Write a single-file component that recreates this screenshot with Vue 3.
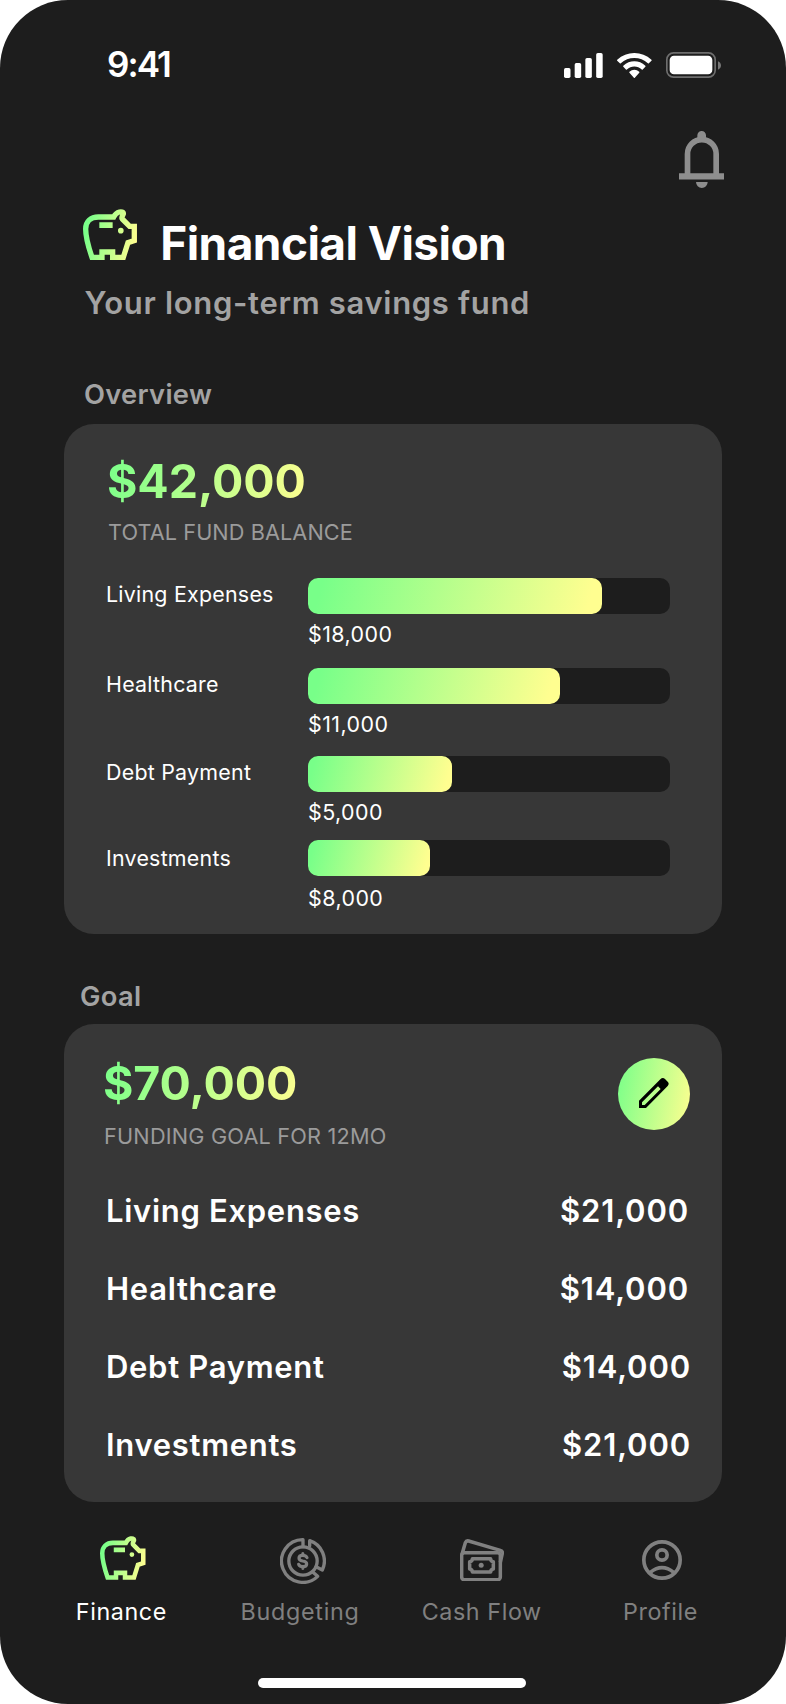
<script setup>
const overview = [
  { name: 'Living Expenses', amount: '$18,000', fill: 294 },
  { name: 'Healthcare', amount: '$11,000', fill: 252 },
  { name: 'Debt Payment', amount: '$5,000', fill: 144 },
  { name: 'Investments', amount: '$8,000', fill: 122 },
]
const goals = [
  { name: 'Living Expenses', amount: '$21,000' },
  { name: 'Healthcare', amount: '$14,000' },
  { name: 'Debt Payment', amount: '$14,000' },
  { name: 'Investments', amount: '$21,000' },
]
</script>

<template>
  <main class="screen">
    <header class="status">
      <span class="time">9:41</span>
      <div class="indicators">
        <svg class="signal" viewBox="0 0 116 75">
          <rect x="0" y="45" width="19.5" height="30" rx="5" />
          <rect x="32" y="30" width="19.5" height="45" rx="5" />
          <rect x="64" y="15" width="19.5" height="60" rx="5" />
          <rect x="96.5" y="0" width="19.5" height="75" rx="5" />
        </svg>
        <svg class="wifi" viewBox="0 0 17.142 12.328" preserveAspectRatio="none">
          <path d="M8.571 2.466C11.058 2.466 13.45 3.388 15.253 5.042C15.389 5.17 15.606 5.168 15.739 5.038L17.037 3.775C17.105 3.709 17.142 3.62 17.142 3.527C17.141 3.435 17.102 3.346 17.034 3.281C12.303 -1.094 4.839 -1.094 .108 3.281C.04 3.346 .001 3.435 0 3.527C0 3.62 .037 3.709 .105 3.775L1.403 5.038C1.536 5.168 1.753 5.17 1.889 5.042C3.692 3.388 6.084 2.466 8.571 2.466ZM8.568 6.687C9.925 6.686 11.234 7.198 12.24 8.122C12.376 8.253 12.591 8.251 12.723 8.116L14.011 6.797C14.078 6.727 14.116 6.634 14.115 6.537C14.114 6.439 14.075 6.347 14.005 6.279C10.942 3.355 6.197 3.355 3.133 6.279C3.064 6.347 3.024 6.439 3.023 6.537C3.023 6.634 3.06 6.728 3.128 6.797L4.415 8.116C4.548 8.251 4.762 8.253 4.898 8.122C5.904 7.199 7.212 6.687 8.568 6.687ZM11.092 9.48C11.094 9.585 11.057 9.687 10.99 9.761L8.813 12.216C8.749 12.288 8.662 12.328 8.572 12.328C8.481 12.328 8.394 12.288 8.33 12.216L6.153 9.761C6.086 9.687 6.049 9.585 6.051 9.48C6.053 9.375 6.094 9.275 6.164 9.204C7.554 7.888 9.59 7.888 10.98 9.204C11.05 9.275 11.09 9.375 11.092 9.48Z" />
        </svg>
        <svg class="battery" viewBox="0 0 165 78">
          <rect x="2.5" y="2.5" width="145" height="73" rx="20" class="shell" />
          <rect x="11" y="11" width="128" height="56" rx="13" />
          <path d="M156 28C162 31 165 35 165 40.500C165 46 162 50 156 53Z" class="nub" />
        </svg>
      </div>
    </header>

    <div class="alerts">
      <svg class="bell" viewBox="857 393 137 171">
        <path d="M882.500 522V462A43 43 0 0 1 968.500 462V522" fill="none" stroke="currentColor" stroke-width="17" />
        <path d="M912 418V406A13 13 0 0 1 938 406V418ZM857 520H994V538.500H857ZM908 546H943A17.500 18 0 0 1 908 546Z" fill="currentColor" />
      </svg>
    </div>

    <section class="heading">
      <svg class="pig" viewBox="69 57 163 154" preserveAspectRatio="none">
        <defs>
          <linearGradient id="pigFill" gradientUnits="userSpaceOnUse" x1="75" y1="120" x2="230" y2="150">
            <stop offset="0" stop-color="#78ff89" />
            <stop offset="1" stop-color="#fffe90" />
          </linearGradient>
        </defs>
        <path d="M161 81H115C92 81 77 95 77 117C77 141 87 176 96 202H126V186H158V202H190L204 158L223 152V109H209L187 87C183 83 188 77 190 72C191 65 183 65 178 66C169 68 165 73 161 81Z" fill="none" stroke="url(#pigFill)" stroke-width="16" />
        <path d="M118 97H158V114H118ZM174 122a8.500 8.500 0 1 0 17 0a8.500 8.500 0 1 0 -17 0Z" fill="url(#pigFill)" />
      </svg>
      <h1>Financial Vision</h1>
    </section>
    <p class="subtitle">Your long-term savings fund</p>

    <h2 class="label-overview">Overview</h2>
    <section class="card overview">
      <div class="total">$42,000</div>
      <div class="caption">TOTAL FUND BALANCE</div>
      <ul class="bars">
        <li v-for="row in overview" :key="row.name">
          <span class="bar-name">{{ row.name }}</span>
          <div class="bar-side">
            <div class="track"><div class="fill" :style="{ width: row.fill + 'px' }"></div></div>
            <span class="bar-amount">{{ row.amount }}</span>
          </div>
        </li>
      </ul>
    </section>

    <h2 class="label-goal">Goal</h2>
    <section class="card goal">
      <div class="goal-head">
        <div>
          <div class="total">$70,000</div>
          <div class="caption">FUNDING GOAL FOR 12MO</div>
        </div>
        <button class="edit" aria-label="Edit goal">
          <svg viewBox="297 204 90 90">
            <path fill-rule="evenodd" d="M297 294V272L361 208Q368 201 375 207L383 215Q389 221 383 228L318 294ZM306 285H314L362 237L354 229L306 277Z" />
          </svg>
        </button>
      </div>
      <ul class="goals">
        <li v-for="row in goals" :key="row.name">
          <span>{{ row.name }}</span>
          <span class="goal-amount">{{ row.amount }}</span>
        </li>
      </ul>
    </section>

    <nav class="tabs">
      <a class="tab active">
        <span class="tab-icon">
          <svg class="pig-small" viewBox="69 57 163 154" preserveAspectRatio="none">
            <path d="M161 81H115C92 81 77 95 77 117C77 141 87 176 96 202H126V186H158V202H190L204 158L223 152V109H209L187 87C183 83 188 77 190 72C191 65 183 65 178 66C169 68 165 73 161 81Z" fill="none" stroke="url(#pigFill)" stroke-width="16" />
            <path d="M118 97H158V114H118ZM174 122a8.500 8.500 0 1 0 17 0a8.500 8.500 0 1 0 -17 0Z" fill="url(#pigFill)" />
          </svg>
        </span>
        <span class="tab-name">Finance</span>
      </a>
      <a class="tab">
        <span class="tab-icon">
          <svg class="budget" viewBox="660 84 138 138" fill="none" stroke="currentColor" stroke-width="10" stroke-linejoin="round" stroke-linecap="round">
            <circle cx="729" cy="153" r="42.500" />
            <path d="M729 110V89A64 64 0 1 0 773 199L759 187" />
            <path d="M749 108V92A64 64 0 0 1 787 180L768 170" />
            <path stroke-width="9.500" d="M741 143C738 137 733 136 728 136C721 136 717 139 717 144C717 150 722 152 728 153C736 154 740 156 740 162C740 167 735 170 729 170C722 170 718 168 716 163M728.500 131V136M728.500 170V175" />
          </svg>
        </span>
        <span class="tab-name budgeting">Budgeting</span>
      </a>
      <a class="tab">
        <span class="tab-icon">
          <svg class="cash" viewBox="210 86 132 128" fill="none" stroke="currentColor" stroke-width="10.500" stroke-linejoin="round">
            <rect x="215" y="127" width="116" height="81" rx="8" />
            <path d="M216 132L226 97Q229 90 236 92L331 120Q338 122 337 129L331 156" />
            <path d="M247 145H302Q302 153 310 154V176Q302 177 302 185H247Q247 177 239 176V154Q247 153 247 145Z" />
            <circle cx="273.500" cy="165" r="7.500" fill="currentColor" stroke="none" />
          </svg>
        </span>
        <span class="tab-name cash-flow">Cash Flow</span>
      </a>
      <a class="tab">
        <span class="tab-icon">
          <svg class="profile" viewBox="756 90 120 120" fill="none" stroke="currentColor" stroke-width="11">
            <circle cx="816" cy="150" r="54.500" />
            <circle cx="816" cy="135" r="15.500" />
            <path d="M781 187Q816 159 851 187" />
          </svg>
        </span>
        <span class="tab-name">Profile</span>
      </a>
    </nav>
    <div class="home"></div>
  </main>
</template>

<style>
body {
  margin: 0;
  background: #fff;
}
</style>

<style scoped>
* {
  box-sizing: border-box;
}
.screen {
  width: 786px;
  height: 1704px;
  overflow: hidden;
  display: flex;
  flex-direction: column;
  background: #1d1d1d;
  border-radius: 68px;
  color: #fff;
  font-family: Inter, "Liberation Sans", sans-serif;
}
h1, h2, p, ul {
  margin: 0;
  padding: 0;
  list-style: none;
}
svg {
  display: block;
  flex: none;
}
.status {
  display: flex;
  justify-content: space-between;
  height: 131px;
  padding: 44px 65px 0 107px;
}
.time {
  font-size: 35px;
  line-height: 40px;
  font-weight: 600;
  letter-spacing: -1.900px;
}
.indicators {
  display: flex;
  align-items: flex-start;
  padding-top: 8px;
  fill: #fff;
}
.signal {
  width: 38.700px;
  height: 25px;
  margin-top: 1px;
}
.wifi {
  width: 34.700px;
  height: 25px;
  margin: 1px 14px 0 14.500px;
}
.battery {
  width: 55px;
  height: 26px;
}
.shell {
  fill: none;
  stroke: #6e6e6e;
  stroke-width: 5;
}
.nub {
  fill: #777;
}
.alerts {
  display: flex;
  justify-content: flex-end;
  height: 78px;
  padding-right: 61.600px;
}
.bell {
  width: 45.700px;
  height: 57px;
  color: #8e8e8e;
}
.heading {
  display: flex;
  height: 74px;
  padding-left: 83px;
}
.pig {
  width: 54.300px;
  height: 51.300px;
}
h1 {
  padding: 6px 0 0 23px;
  font-size: 46px;
  line-height: 56px;
  font-weight: 700;
  letter-spacing: -0.570px;
}
.subtitle {
  height: 95px;
  padding-left: 84.500px;
  color: #a3a3a3;
  font-size: 31px;
  line-height: 40px;
  font-weight: 600;
  letter-spacing: 0.680px;
}
h2 {
  color: #a3a3a3;
  font-size: 27.300px;
  line-height: 34px;
  font-weight: 600;
  letter-spacing: 0.300px;
}
.label-overview {
  height: 46px;
  padding-left: 84px;
}
.label-goal {
  height: 44px;
  margin-top: 46px;
  padding-left: 80px;
}
.card {
  width: 658px;
  margin-left: 64px;
  background: #373737;
  border-radius: 30px;
}
.total {
  width: max-content;
  font-size: 46.500px;
  line-height: 58px;
  font-weight: 700;
  letter-spacing: -0.100px;
  color: transparent;
  background: linear-gradient(105deg, #78ff89, #fffe90);
  -webkit-background-clip: text;
  background-clip: text;
}
.caption {
  color: #9b9b9b;
  font-size: 21.700px;
  line-height: 28px;
}
.overview {
  height: 510px;
  padding: 28px 52px 0 43px;
}
.overview .caption {
  margin-top: 8px;
  padding-left: 1px;
  letter-spacing: 0.080px;
}
.bars {
  display: flex;
  flex-direction: column;
  margin-top: 32px;
}
.bars li {
  display: flex;
  justify-content: space-between;
  margin-bottom: 20px;
  font-size: 21.400px;
  line-height: 28px;
}
.bars li:nth-child(2) {
  margin-bottom: 18px;
}
.bars li:nth-child(3) {
  margin-bottom: 14px;
}
.bar-name {
  padding-top: 2px;
  margin-left: -1px;
  letter-spacing: 0.240px;
}
.bar-side {
  width: 362px;
}
.track {
  height: 36px;
  margin-bottom: 6px;
  background: #1d1d1d;
  border-radius: 10px;
}
.fill {
  height: 36px;
  border-radius: 10px;
  background: linear-gradient(105deg, #78ff89 5%, #fffe90 95%);
}
.bars li:last-child .bar-name {
  padding-top: 4px;
}
.bars li:last-child .track {
  margin-bottom: 8px;
}
.bar-amount {
  display: block;
  letter-spacing: 0.450px;
}
.goal {
  height: 478px;
  padding: 30px 32px 0 39px;
}
.goal-head {
  display: flex;
  justify-content: space-between;
}
.goal .caption {
  margin-top: 10px;
  padding-left: 1px;
  letter-spacing: 0.200px;
}
.edit {
  display: flex;
  align-items: center;
  justify-content: center;
  width: 72px;
  height: 72px;
  margin-top: 4px;
  padding: 0 0 2px;
  border: 0;
  border-radius: 50%;
  background: linear-gradient(100deg, #78ff89, #fffe90);
}
.edit svg {
  width: 30px;
  height: 30px;
}
.goals {
  margin-top: 41px;
}
.goals li {
  display: flex;
  justify-content: space-between;
  height: 78px;
  padding: 0 1px 0 3px;
  font-size: 31px;
  line-height: 40px;
  font-weight: 600;
  letter-spacing: 0.700px;
}
.goal-amount {
  letter-spacing: 0.850px;
}
.goals li:nth-child(n + 3) {
  padding-right: 0;
}
.goals li:nth-child(n + 3) .goal-amount {
  margin-right: -1px;
}
.tabs {
  display: grid;
  grid-template-columns: repeat(4, 179.700px);
  margin: 34px 0 0 31px;
  color: #808080;
}
.tab {
  display: flex;
  flex-direction: column;
  align-items: center;
}
.tab-icon {
  display: flex;
  height: 61px;
  padding-left: 4px;
}
.active {
  color: #fff;
}
.tab-name {
  padding-left: 1px;
  font-size: 23.300px;
  line-height: 30px;
  letter-spacing: 0.600px;
}
.budgeting {
  padding: 0 1px 0 0;
  letter-spacing: 0.750px;
}
.cash-flow {
  padding-left: 3px;
}
.pig-small {
  width: 45.800px;
  height: 44px;
}
.budget {
  width: 46px;
  height: 46px;
  margin: 2px 0 0 1px;
}
.cash {
  width: 44px;
  height: 42.700px;
  margin: 2.500px 0 0;
}
.profile {
  width: 40px;
  height: 40px;
  margin-top: 4px;
}
.home {
  width: 268px;
  height: 10px;
  margin: 51px 0 0 258px;
  border-radius: 5px;
  background: #fff;
}
</style>
